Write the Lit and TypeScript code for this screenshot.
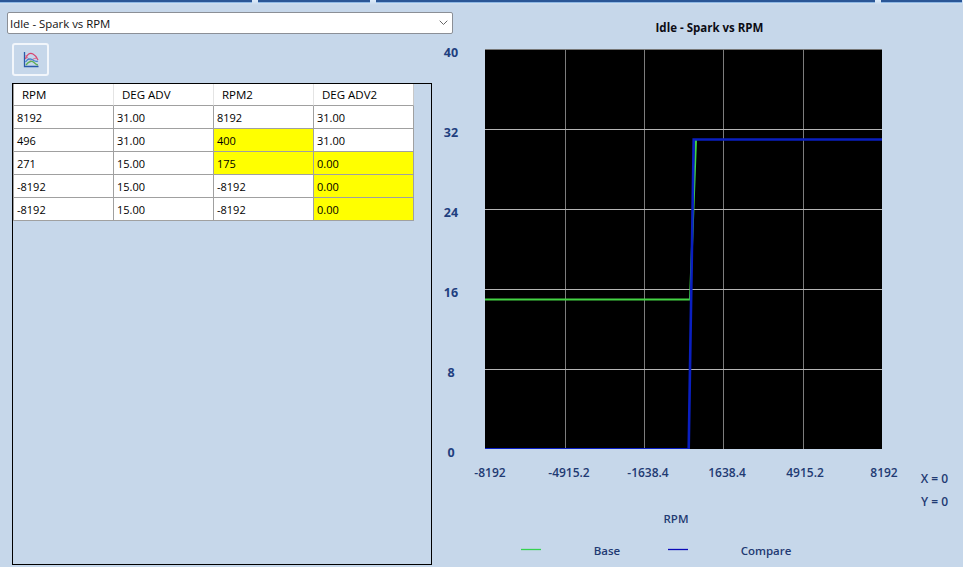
import { LitElement, html, css, svg } from "lit";
import { customElement } from "lit/decorators.js";

const HEAD = ["RPM", "DEG ADV", "RPM2", "DEG ADV2"];
const ROWS: [string, boolean][][] = [
  [["8192", false], ["31.00", false], ["8192", false], ["31.00", false]],
  [["496", false], ["31.00", false], ["400", true], ["31.00", false]],
  [["271", false], ["15.00", false], ["175", true], ["0.00", true]],
  [["-8192", false], ["15.00", false], ["-8192", false], ["0.00", true]],
  [["-8192", false], ["15.00", false], ["-8192", false], ["0.00", true]],
];
const XT = [
  [490, "-8192"], [569, "-4915.2"], [648, "-1638.4"],
  [727, "1638.4"], [805, "4915.2"], [884, "8192"],
] as [number, string][];
const YT = [[52, "40"], [132, "32"], [212, "24"], [292, "16"], [372, "8"], [452, "0"]] as [number, string][];

@customElement("app-root")
export class AppRoot extends LitElement {
  static styles = css`
    :host { display: block; width: 963px; height: 567px; overflow: hidden; position: relative;
      background: #c6d7ea; font-family: "Open Sans", "Noto Sans", sans-serif; font-size: 11.5px; color: #000; }
    .strip { display: flex; gap: 6px; height: 5px; background: linear-gradient(#dcebfa, #c6d7ea); }
    .strip i { display: block; height: 2px; background: #2a5696; border-bottom: 1px solid #8fb8e4; }
    .left { position: absolute; left: 7px; top: 12px; width: 446px; }
    .select { height: 22px; box-sizing: border-box; border: 1px solid #8b8f96; border-radius: 2px; background: #fff;
      display: flex; align-items: center; justify-content: space-between; padding: 0 4px 0 2px; font-size: 11.4px; color: #111; }
    .select svg { display: block; }
    .tool { margin: 9px 0 0 5px; width: 37px; height: 33px; box-sizing: border-box; border: 2px solid #f2f6fb; border-radius: 3px;
      background: #c6d7ea; display: flex; align-items: center; justify-content: center; }
    .panel { margin: 7px 0 0 5px; width: 420px; height: 482px; box-sizing: border-box; border: 1px solid #000; }
    .table { display: grid; grid-template-columns: repeat(4, 100px); width: 401px; box-sizing: border-box; background: #fff;
      border-left: 1px solid #a0a0a0; }
    .h, .c { box-sizing: border-box; display: flex; align-items: center; white-space: nowrap;
      border-right: 1px solid #a0a0a0; border-bottom: 1px solid #a0a0a0; }
    .h { height: 22px; padding: 0 0 1px 8px; border-right-color: #e4e4e4; }
    .h:nth-child(4) { border-right-color: #c8c8c8; }
    .c { height: 23px; padding: 0 0 0 3px; font-size: 11px; }
    .c.y { background: #ffff00; }
    svg.chart { position: absolute; left: 0; top: 0; }
    svg.chart text { font-family: "Open Sans", "Noto Sans", sans-serif; font-weight: 600; font-size: 12px; fill: #1f3a73; }
    svg.chart text.title { fill: #0c0c14; font-weight: 700; font-size: 11.5px; }
    svg.chart text.y { font-size: 12.5px; fill: #1f3f7f; font-weight: 700; }
    svg.chart text.small { font-size: 11.5px; }
  `;

  render() {
    return html`
      <div class="strip">
        <i style="width:252px"></i><i style="width:112px"></i><i style="width:499px"></i><i style="width:81px"></i>
      </div>
      <div class="left">
        <div class="select">
          <span>Idle - Spark vs RPM</span>
          <svg width="9" height="6" viewBox="0 0 9 6"><path d="M.7 .7 4.5 4.5 8.3 .7" fill="none" stroke="#666" stroke-width="1"/></svg>
        </div>
        <div class="tool">
          <svg width="16" height="17" viewBox="0 0 16 17" fill="none">
            <path d="M1.5 1V15.5H15.5" stroke="#2a5aa8" stroke-width="1.3"/>
            <path d="M2.5 8C4 3 7 1.5 10 3S14 7 15 9" stroke="#d8456f" stroke-width="1.2"/>
            <path d="M2.5 4C4 5.5 6 9.5 8 9S12 6.5 15 7.5" stroke="#d8688c" stroke-width="1"/>
            <path d="M2.5 11C4.5 8 6.5 7 9 8.5S13 11 15 10" stroke="#3f7fd0" stroke-width="1.2"/>
            <path d="M3 14C6 10 9 9.5 11 11.5S14 14 15 14" stroke="#5fae55" stroke-width="1.3"/>
          </svg>
        </div>
        <div class="panel">
          <div class="table">
            ${HEAD.map((h) => html`<div class="h">${h}</div>`)}
            ${ROWS.map((r) => r.map(([t, y]) => html`<div class="c ${y ? "y" : ""}">${t}</div>`))}
          </div>
        </div>
      </div>
      <svg class="chart" width="963" height="567" viewBox="0 0 963 567">
        <text class="title" x="709.5" y="32" text-anchor="middle">Idle - Spark vs RPM</text>
        <rect x="485" y="49" width="397" height="400" fill="#000"/>
        <path d="M485 49.5H882" stroke="#777"/>
        ${[565, 644, 723, 803].map((x) => svg`<path d="M${x + 0.5} 49V449" stroke="#7c7c7c"/>`)}
        ${[129, 209, 289, 369].map((y) => svg`<path d="M485 ${y + 0.5}H882" stroke="#b5b5b5"/>`)}
        <path d="M485 299.5H690L696 140" fill="none" stroke="#44d444" stroke-width="2"/>
        <path d="M485 448.5H688.5" fill="none" stroke="#0a1fc4"/>
        <path d="M688.7 449L693.7 139.5H882" fill="none" stroke="#0a1fc0" stroke-width="2.6"/>
        ${YT.map(([y, t]) => svg`<text class="y" x="451" y="${y + 5}" text-anchor="middle">${t}</text>`)}
        ${XT.map(([x, t]) => svg`<text x="${x}" y="477" text-anchor="middle">${t}</text>`)}
        <text x="934.5" y="483" text-anchor="middle">X = 0</text>
        <text x="934.5" y="506" text-anchor="middle">Y = 0</text>
        <text class="small" x="676" y="523" text-anchor="middle">RPM</text>
        <path d="M521 549.5H541" stroke="#35d24f" stroke-width="1.3"/>
        <text class="small" x="607" y="555" text-anchor="middle">Base</text>
        <path d="M668 549.5H688" stroke="#0a0ab8" stroke-width="1.3"/>
        <text class="small" x="766" y="555" text-anchor="middle">Compare</text>
      </svg>
    `;
  }
}
